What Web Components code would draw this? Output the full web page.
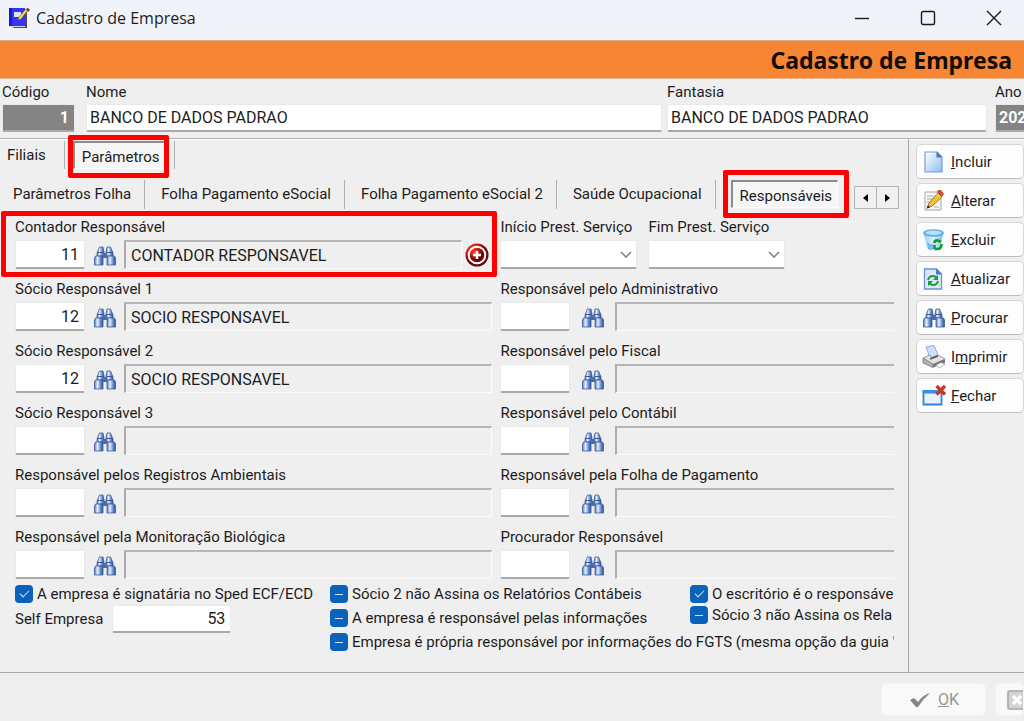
<!DOCTYPE html>
<html lang="pt-BR">
<head>
<meta charset="utf-8">
<title>Cadastro de Empresa</title>
<style>
    html, body { margin: 0; height: 100%; }
    body {
        background: #efefef;
        color: #1c1c1c;
        font: 15px/20px Roboto, "Liberation Sans", sans-serif;
        overflow: hidden;
    }
</style>
</head>
<body>
<app-window></app-window>

<script>
// Shared pieces -------------------------------------------------------

const icons = {
    app: `<svg viewBox="0 0 22 22" width="22" height="22">
        <path d="M4 3h14l1 2v16H6l-3-2z" fill="#4a4a52"/>
        <path d="M1 1h16v18H1z" fill="#3434f4"/>
        <path d="M1 1h3v18H1z" fill="#1c1cc4"/>
        <path d="M6 5h7v5H6z" fill="#dfe4ff"/>
        <path d="M3 19h14v1H4z" fill="#d8d8d8"/>
        <path d="M20 3l-7 9-3 1 1-3 7-8z" fill="#f2e04a" stroke="#7a6a20" stroke-width=".6"/>
        <path d="M18 2l2-1 2 2-2 2z" fill="#7a3038"/></svg>`,
    binoculars: `<svg viewBox="0 0 22 20" width="22" height="20">
        <defs><linearGradient id="b"><stop offset="0" stop-color="#5577b4"/><stop offset=".35" stop-color="#e6effa"/><stop offset=".7" stop-color="#6b8fcb"/><stop offset="1" stop-color="#2c4f98"/></linearGradient></defs>
        <g fill="url(#b)" stroke="#3b5b9e" stroke-width=".8">
        <path d="M5.500 1h3.500l1 5v4H3V7z"/><path d="M13 1h3.500l2.500 6v3h-7V6z"/>
        <path d="M1.500 10h7.500v9H.500v-7z"/><path d="M13 10h7.500l1 2v7H13z"/></g>
        <path d="M9 7h4v5H9z" fill="#4a6bac"/><path d="M3.500 6.500h6M12.500 6.500h6" stroke="#3a5896"/></svg>`,
    add: `<svg viewBox="0 0 24 24" width="24" height="24">
        <defs><radialGradient id="a" cx=".35" cy=".3"><stop offset="0" stop-color="#ff5038"/><stop offset=".6" stop-color="#d01a14"/><stop offset="1" stop-color="#6e0808"/></radialGradient></defs>
        <circle cx="12" cy="12" r="11.500" fill="url(#a)"/><circle cx="12" cy="12" r="8.300" fill="none" stroke="#fff" stroke-width="2"/>
        <circle cx="12" cy="12" r="6.800" fill="url(#a)"/><path d="M12 8v8M8 12h8" stroke="#fff" stroke-width="2.400"/></svg>`,
    incluir: `<svg viewBox="0 0 22 24" width="22" height="24">
        <defs><linearGradient id="p" x2="1" y2="1"><stop offset="0" stop-color="#fff"/><stop offset="1" stop-color="#8fbdf0"/></linearGradient></defs>
        <path d="M2 2h12l5 5v15H2z" fill="url(#p)" stroke="#7b9bd4" stroke-width="1.200"/><path d="M13.500 1.500v6H19.500z" fill="#4679c4"/></svg>`,
    alterar: `<svg viewBox="0 0 22 24" width="22" height="24">
        <path d="M2 3h16v18H2z" fill="#f4f4f4" stroke="#a8a8a8"/><path d="M4 7h7M4 10h6M4 13h4M11 18h5M4 17h3" stroke="#aaa"/>
        <path d="M15 4l4 4L9 17l-4.500 2L6 14z" fill="#f5c22e" stroke="#8b5a14" stroke-width=".8"/>
        <path d="M15 1l3 0 3 4-2 3-5-5z" fill="#d84a32"/><path d="M13.500 4l4.500 4.500-1 1-4.500-4.500z" fill="#c9c9c9"/><path d="M5 16.500l-1.500 3 3.500-1z" fill="#222"/></svg>`,
    excluir: `<svg viewBox="0 0 24 24" width="24" height="24">
        <defs><linearGradient id="t"><stop offset="0" stop-color="#8fcdf4"/><stop offset=".5" stop-color="#e0f3ff"/><stop offset="1" stop-color="#78bcea"/></linearGradient></defs>
        <path d="M1.500 5l4 16q6 3 12 0l4-16z" fill="url(#t)"/><ellipse cx="11.500" cy="5" rx="10.500" ry="3.800" fill="#62aee6"/>
        <ellipse cx="11.500" cy="4.800" rx="8" ry="2.200" fill="#b9e2fa"/><path d="M5 14q3 3 7 2l-1 6q-3 0-5-1z" fill="#4a9be0" opacity=".6"/>
        <path d="M12 15q1-3 4-2.500l3 1.500M19.500 16q0 5-4 5h-3M12.500 17v4" fill="none" stroke="#159a35" stroke-width="2.600"/></svg>`,
    atualizar: `<svg viewBox="0 0 22 24" width="22" height="24">
        <path d="M1.500 2h12l5 5v15h-17z" fill="#dbe8fa" stroke="#6b93d2" stroke-width="1.300"/><path d="M13 1.500v6h6z" fill="#4a7bc5"/>
        <path d="M5 13q1-4 5-4 2 0 4 2M15 14q-1 4-5 4-2 0-4-2" fill="none" stroke="#1e9b33" stroke-width="2"/>
        <path d="M15 8v5h-5zM5 19v-5h5z" fill="#1e9b33"/></svg>`,
    imprimir: `<svg viewBox="0 0 24 24" width="24" height="24">
        <path d="M4 2l8-1.500 4 9.500-8 3z" fill="#cfe0ff" stroke="#8fabe4"/><path d="M1 13l7-3 2 3 6-3 7 4-12 6z" fill="#e2e2e2" stroke="#8a8a8a" stroke-width=".8"/>
        <path d="M1 13v5l10 4.500V19z" fill="#b4b4b4" stroke="#777" stroke-width=".8"/><path d="M11 19l12-5v4l-12 4.500z" fill="#777"/>
        <path d="M14 20l5-2.500 4 2-6 3.500z" fill="#fff" stroke="#888" stroke-width=".6"/><path d="M8 14l8-3" stroke="#555" stroke-width="1.400"/></svg>`,
    fechar: `<svg viewBox="0 0 24 24" width="24" height="24">
        <path d="M1.500 7h18v13.500h-18z" fill="#e8f1fc" stroke="#2f83d8" stroke-width="1.800"/><path d="M.6 6h19v3.500H.600z" fill="#3a8ee2"/>
        <path d="M14.500 2l8.500 8.500M23 2l-8.500 8.500" stroke="#c33a2c" stroke-width="3.400"/></svg>`,
    ok: `<svg viewBox="0 0 20 16" width="20" height="16"><path d="M0 8l4-2 4 4q5-7 12-9Q13 7 8 15H6z" fill="#858585"/></svg>`,
    cancel: `<svg viewBox="0 0 20 20" width="20" height="20"><rect x="1" y="1" width="18" height="18" rx="2" fill="#d2d2d2" stroke="#b4b4b4" stroke-width="2"/>
        <path d="M6 6l8 8M14 6l-8 8" stroke="#fff" stroke-width="3.200"/></svg>`
}

// Field look used by every element that holds an input
const fieldStyle = `
    * { box-sizing: border-box; }
    input, select {
        font: inherit; font-size: 16px; color: inherit; margin: 0; min-width: 0;
        height: 29px; padding: 0 5px; border: 1px solid #e9e9e9; border-bottom: 2px solid #a9a9a9;
        border-radius: 2px; background: #fff; outline: 0;
    }
    label { display: block; white-space: nowrap; }
`

class BaseElement extends HTMLElement {
    constructor() {
        super()
        this.attachShadow({ mode: 'open' })
    }

    connectedCallback() {
        this.shadowRoot.innerHTML = this.render()
    }

    attr(name) {
        return this.getAttribute(name) ?? ''
    }
}

// Title bar and banner ------------------------------------------------

class TitleBar extends BaseElement {
    render() {
        return `
            <style>
                :host { display: flex; align-items: center; height: 40px; padding-left: 8px; background: #f0f3fa; }
                h1 { flex: 1; margin: 0 0 4px 6px; font: 16px/20px "Open Sans", sans-serif; }
                svg { display: block; }
                .icon { margin-bottom: 4px; }
                button { width: 66px; height: 36px; padding: 0; margin-bottom: 4px; border: 0; background: none; display: grid; place-items: center; }
                .buttons { display: flex; margin-right: -3px; }
                .buttons svg { fill: none; stroke: #1a1a1a; stroke-width: 1.400; }
            </style>
            <span class="icon">${icons.app}</span>
            <h1>${this.attr('caption')}</h1>
            <div class="buttons">
                <button aria-label="Minimizar"><svg width="16" height="16"><path d="M1 8.500h14"/></svg></button>
                <button aria-label="Maximizar"><svg width="16" height="16"><rect x="1.500" y="1.500" width="13" height="13" rx="1.500"/></svg></button>
                <button aria-label="Fechar janela"><svg width="16" height="16"><path d="M1 1l14 14M15 1L1 15"/></svg></button>
            </div>
        `
    }
}

class PageBanner extends BaseElement {
    render() {
        return `
            <style>
                :host {
                    display: block; box-sizing: border-box; height: 39px; padding-right: 12px;
                    border-top: 1px solid #dcaa78; border-bottom: 1px solid #e8b48c; background: #f68634;
                    color: #120c06; font: bold 23px/38px "Noto Sans", sans-serif; text-align: right;
                }
            </style>
            <slot></slot>
        `
    }
}

// Fields --------------------------------------------------------------

class TextField extends BaseElement {
    render() {
        return `
            <style>
                ${fieldStyle}
                :host { display: block; min-width: 0; }
                :host([row]) { display: flex; align-items: center; gap: 9px; }
                label { margin-bottom: 2px; }
                :host([row]) label { margin: 0; }
                input { display: block; width: 100%; height: 28px; padding: 0 3px; }
                :host([row]) input { width: 119px; }
                :host([dark]) input { min-width: 40px; background: #848484; color: #fff; font-weight: bold; }
                :host([right]) input { text-align: right; padding-right: 5px; }
            </style>
            <label for="field">${this.attr('label')}</label>
            <input id="field" value="${this.attr('value')}">
        `
    }
}

class LookupField extends BaseElement {
    render() {
        const add = this.hasAttribute('add') ? `<button class="add" aria-label="Adicionar">${icons.add}</button>` : ''
        return `
            <style>
                ${fieldStyle}
                :host { display: block; position: relative; min-width: 0; }
                /* outline that calls out the field */
                :host([marked])::after {
                    content: ""; position: absolute; inset: -6px -5px -8px -14px;
                    border: 5px solid #fe0000; border-radius: 2px; pointer-events: none;
                }
                label { margin-bottom: 3px; }
                .row { display: flex; }
                .code { width: 70px; text-align: right; }
                .name {
                    flex: 1; background: #efefef; border: 1px solid #fafafa; border-radius: 0;
                    border-top: 2px solid #b6b6b6; border-left: 2px solid #acacac;
                }
                :host([open-end]) .name { border-right: 0; }
                button { width: var(--icon-width, 39px); padding: 3px 0 0; border: 0; background: none; display: grid; place-items: center; }
                button.add { width: 30px; padding: 0; }
                svg { display: block; }
            </style>
            <label for="code">${this.attr('label')}</label>
            <div class="row">
                <input id="code" class="code" value="${this.attr('code')}">
                <button aria-label="Procurar ${this.attr('label')}">${icons.binoculars}</button>
                <input class="name" readonly aria-label="Nome: ${this.attr('label')}" value="${this.attr('value')}">
                ${add}
            </div>
        `
    }
}

class DateSelect extends BaseElement {
    render() {
        return `
            <style>
                ${fieldStyle}
                :host { display: block; width: 137px; }
                label { margin-bottom: 3px; }
                .box { position: relative; }
                select { display: block; width: 100%; appearance: none; }
                svg { position: absolute; right: 5px; top: 11px; pointer-events: none; }
            </style>
            <label for="date">${this.attr('label')}</label>
            <div class="box">
                <select id="date"><option></option></select>
                <svg width="12" height="8"><path d="M1 1l5 5 5-5" fill="none" stroke="#858585" stroke-width="1.600"/></svg>
            </div>
        `
    }
}

class CheckBox extends BaseElement {
    render() {
        return `
            <style>
                :host { display: block; height: 18px; }
                label { display: flex; align-items: center; gap: 4px; height: 18px; white-space: nowrap; }
                input {
                    appearance: none; flex: none; display: grid; place-items: center;
                    width: 18px; height: 18px; margin: 0; border-radius: 4px; background: #0a62bb;
                }
                input::before { content: ""; width: 8px; height: 1px; background: #cfe2f6; }
                input:checked::before {
                    width: 8px; height: 4px; margin-bottom: 3px; background: none; transform: rotate(-45deg);
                    border-left: 1px solid #cfe2f6; border-bottom: 1px solid #cfe2f6;
                }
            </style>
            <label><input type="checkbox" ${this.hasAttribute('checked') ? 'checked' : ''}><slot></slot></label>
        `
    }

    connectedCallback() {
        super.connectedCallback()
        this.shadowRoot.querySelector('input').indeterminate = !this.hasAttribute('checked')
    }
}

// Tabs ----------------------------------------------------------------

class TabItem extends BaseElement {
    render() {
        return `
            <style>
                :host { display: block; position: relative; padding-right: var(--tab-space, 13px); border-right: 1px solid #b0b0b0; }
                :host([selected]) { padding: 0; border: 0; }
                button { height: 28px; padding: 0; border: 0; background: none; font: inherit; color: inherit; white-space: nowrap; }
                :host([selected]) button {
                    padding: 2px 5px 0 7px; background: #f6f6f6;
                    border: 1px solid #fff; border-top: 2px solid #8c8c8c; border-left: 2px solid #8c8c8c;
                }
                :host([marked])::after {
                    content: ""; position: absolute; inset: var(--mark-inset);
                    border: 5px solid #fe0000; border-radius: 2px; pointer-events: none;
                }
            </style>
            <button role="tab" aria-selected="${this.hasAttribute('selected')}"><slot></slot></button>
        `
    }
}

class TabScroller extends BaseElement {
    render() {
        return `
            <style>
                :host { display: flex; }
                button { width: 23px; height: 23px; padding: 0; margin-right: -1px; border: 1px solid #b4b4b4; background: #f0f0f0; display: grid; place-items: center; }
            </style>
            <button aria-label="Anterior"><svg width="5" height="8"><path d="M5 0v8L0 4z"/></svg></button>
            <button aria-label="Próxima"><svg width="5" height="8"><path d="M0 0v8l5-4z"/></svg></button>
        `
    }
}

// Buttons -------------------------------------------------------------

class IconButton extends BaseElement {
    render() {
        return `
            <style>
                :host { display: block; }
                button {
                    box-sizing: border-box; display: flex; align-items: center; width: 100%; height: 35px; gap: 5px;
                    padding: 0 0 0 5px; border: 1px solid #d6d6d6; border-bottom-color: #bdbdbd; border-radius: 5px;
                    background: #fdfdfd; font: inherit; color: inherit; white-space: nowrap; overflow: hidden;
                }
                button:disabled { height: 33px; padding-left: var(--pad, 28px); gap: 8px; border-color: #f4f4f4; background: #f9f9f9; color: #959595; font-size: 16px; }
                .icon { display: grid; place-items: center; width: 24px; flex: none; }
                :host([disabled]) .icon { width: 20px; }
            </style>
            <button ${this.hasAttribute('disabled') ? 'disabled' : ''} aria-label="${this.attr('name')}">
                <span class="icon">${icons[this.attr('icon')]}</span><span><slot></slot></span>
            </button>
        `
    }
}

// Page ----------------------------------------------------------------

class ResponsibleForm extends BaseElement {
    render() {
        return `
            <style>
                :host { display: block; margin: 8px 14px 0 15px; }
                .fields { display: grid; grid-template-columns: 478fr 394fr; gap: 10px 8px; }
                .end { --icon-width: 45px; }
                .dates { display: flex; gap: 11px; }
                .options { display: flex; margin-top: 6px; }
                .left { flex: none; width: 315px; display: grid; gap: 2px; align-content: start; }
                .right { flex: 1; min-width: 0; overflow: hidden; display: grid; grid-template-columns: 360px 1fr; gap: 6px 0; align-content: start; }
                .stack { display: grid; gap: 6px; align-content: start; }
                .stack.tight { gap: 3px; }
                .wide { grid-column: 1 / -1; }
            </style>
            <div class="fields">
                <lookup-field marked add label="Contador Responsável" code="11" value="CONTADOR RESPONSAVEL"></lookup-field>
                <div class="dates">
                    <date-select label="Início Prest. Serviço"></date-select>
                    <date-select label="Fim Prest. Serviço"></date-select>
                </div>
                <lookup-field label="Sócio Responsável 1" code="12" value="SOCIO RESPONSAVEL"></lookup-field>
                <lookup-field class="end" open-end label="Responsável pelo Administrativo"></lookup-field>
                <lookup-field label="Sócio Responsável 2" code="12" value="SOCIO RESPONSAVEL"></lookup-field>
                <lookup-field class="end" open-end label="Responsável pelo Fiscal"></lookup-field>
                <lookup-field label="Sócio Responsável 3"></lookup-field>
                <lookup-field class="end" open-end label="Responsável pelo Contábil"></lookup-field>
                <lookup-field label="Responsável pelos Registros Ambientais"></lookup-field>
                <lookup-field class="end" open-end label="Responsável pela Folha de Pagamento"></lookup-field>
                <lookup-field label="Responsável pela Monitoração Biológica"></lookup-field>
                <lookup-field class="end" open-end label="Procurador Responsável"></lookup-field>
            </div>
            <div class="options">
                <div class="left">
                    <check-box checked>A empresa é signatária no Sped ECF/ECD</check-box>
                    <text-field row right label="Self Empresa" value="53"></text-field>
                </div>
                <div class="right">
                    <div class="stack">
                        <check-box>Sócio 2 não Assina os Relatórios Contábeis</check-box>
                        <check-box>A empresa é responsável pelas informações</check-box>
                    </div>
                    <div class="stack tight">
                        <check-box checked>O escritório é o responsáve</check-box>
                        <check-box>Sócio 3 não Assina os Rela</check-box>
                    </div>
                    <check-box class="wide">Empresa é própria responsável por informações do FGTS (mesma opção da guia '</check-box>
                </div>
            </div>
        `
    }
}

class AppWindow extends BaseElement {
    render() {
        return `
            <style>
                :host { display: flex; flex-direction: column; min-height: 100vh; overflow: hidden; }
                header { display: flex; padding: 3px 0 6px 2px; border-bottom: 1px solid #b2b2b2; box-shadow: 0 1px #fff; }
                .code { width: 73px; margin-right: 11px; }
                .name { flex: 576; margin-right: 5px; }
                .alias { flex: 320; margin-right: 8px; }
                .year { width: 29px; overflow: hidden; }
                .body { flex: 1; display: flex; }
                main { flex: 1; min-width: 0; border-right: 1px solid #a8a8a8; }
                .tabs { display: flex; padding: 2px 0 0 7px; gap: 8px; --tab-space: 18px; --mark-inset: -6px -3px -9px -5px; }
                .rule { width: 1px; background: #b0b0b0; }
                .subtabs { display: flex; margin-top: 11px; padding-left: 13px; gap: 16px; --mark-inset: -10px -11px -9px -8px; }
                .subtabs .last { margin-left: -1px; }
                .subtabs tab-scroller { margin-top: 6px; }
                aside { width: 108px; flex: none; padding: 5px 0 0 7px; display: grid; gap: 4px; align-content: start; }
                footer { display: flex; justify-content: flex-end; gap: 9px; padding: 10px 0 5px; border-top: 1px solid #a8a8a8; }
                .ok { width: 105px; }
                .cancel { width: 29px; --pad: 11px; }
            </style>
            <title-bar caption="Cadastro de Empresa"></title-bar>
            <page-banner>Cadastro de Empresa</page-banner>
            <header>
                <text-field class="code" dark right label="Código" value="1"></text-field>
                <text-field class="name" label="Nome" value="BANCO DE DADOS PADRAO"></text-field>
                <text-field class="alias" label="Fantasia" value="BANCO DE DADOS PADRAO"></text-field>
                <text-field class="year" dark label="Ano" value="202"></text-field>
            </header>
            <div class="body">
                <main>
                    <nav class="tabs" role="tablist">
                        <tab-item>Filiais</tab-item>
                        <tab-item selected marked>Parâmetros</tab-item>
                        <span class="rule"></span>
                    </nav>
                    <nav class="subtabs" role="tablist">
                        <tab-item>Parâmetros Folha</tab-item>
                        <tab-item>Folha Pagamento eSocial</tab-item>
                        <tab-item>Folha Pagamento eSocial 2</tab-item>
                        <tab-item>Saúde Ocupacional</tab-item>
                        <tab-item class="last" selected marked>Responsáveis</tab-item>
                        <tab-scroller></tab-scroller>
                    </nav>
                    <responsible-form></responsible-form>
                </main>
                <aside>
                    <icon-button icon="incluir" name="Incluir"><u>I</u>ncluir</icon-button>
                    <icon-button icon="alterar" name="Alterar"><u>A</u>lterar</icon-button>
                    <icon-button icon="excluir" name="Excluir"><u>E</u>xcluir</icon-button>
                    <icon-button icon="atualizar" name="Atualizar"><u>A</u>tualizar</icon-button>
                    <icon-button icon="binoculars" name="Procurar"><u>P</u>rocurar</icon-button>
                    <icon-button icon="imprimir" name="Imprimir">I<u>m</u>primir</icon-button>
                    <icon-button icon="fechar" name="Fechar"><u>F</u>echar</icon-button>
                </aside>
            </div>
            <footer>
                <icon-button class="ok" disabled icon="ok" name="OK"><u>O</u>K</icon-button>
                <icon-button class="cancel" disabled icon="cancel" name="Cancelar"></icon-button>
            </footer>
        `
    }
}

customElements.define('title-bar', TitleBar)
customElements.define('page-banner', PageBanner)
customElements.define('text-field', TextField)
customElements.define('lookup-field', LookupField)
customElements.define('date-select', DateSelect)
customElements.define('check-box', CheckBox)
customElements.define('tab-item', TabItem)
customElements.define('tab-scroller', TabScroller)
customElements.define('icon-button', IconButton)
customElements.define('responsible-form', ResponsibleForm)
customElements.define('app-window', AppWindow)
</script>
</body>
</html>
